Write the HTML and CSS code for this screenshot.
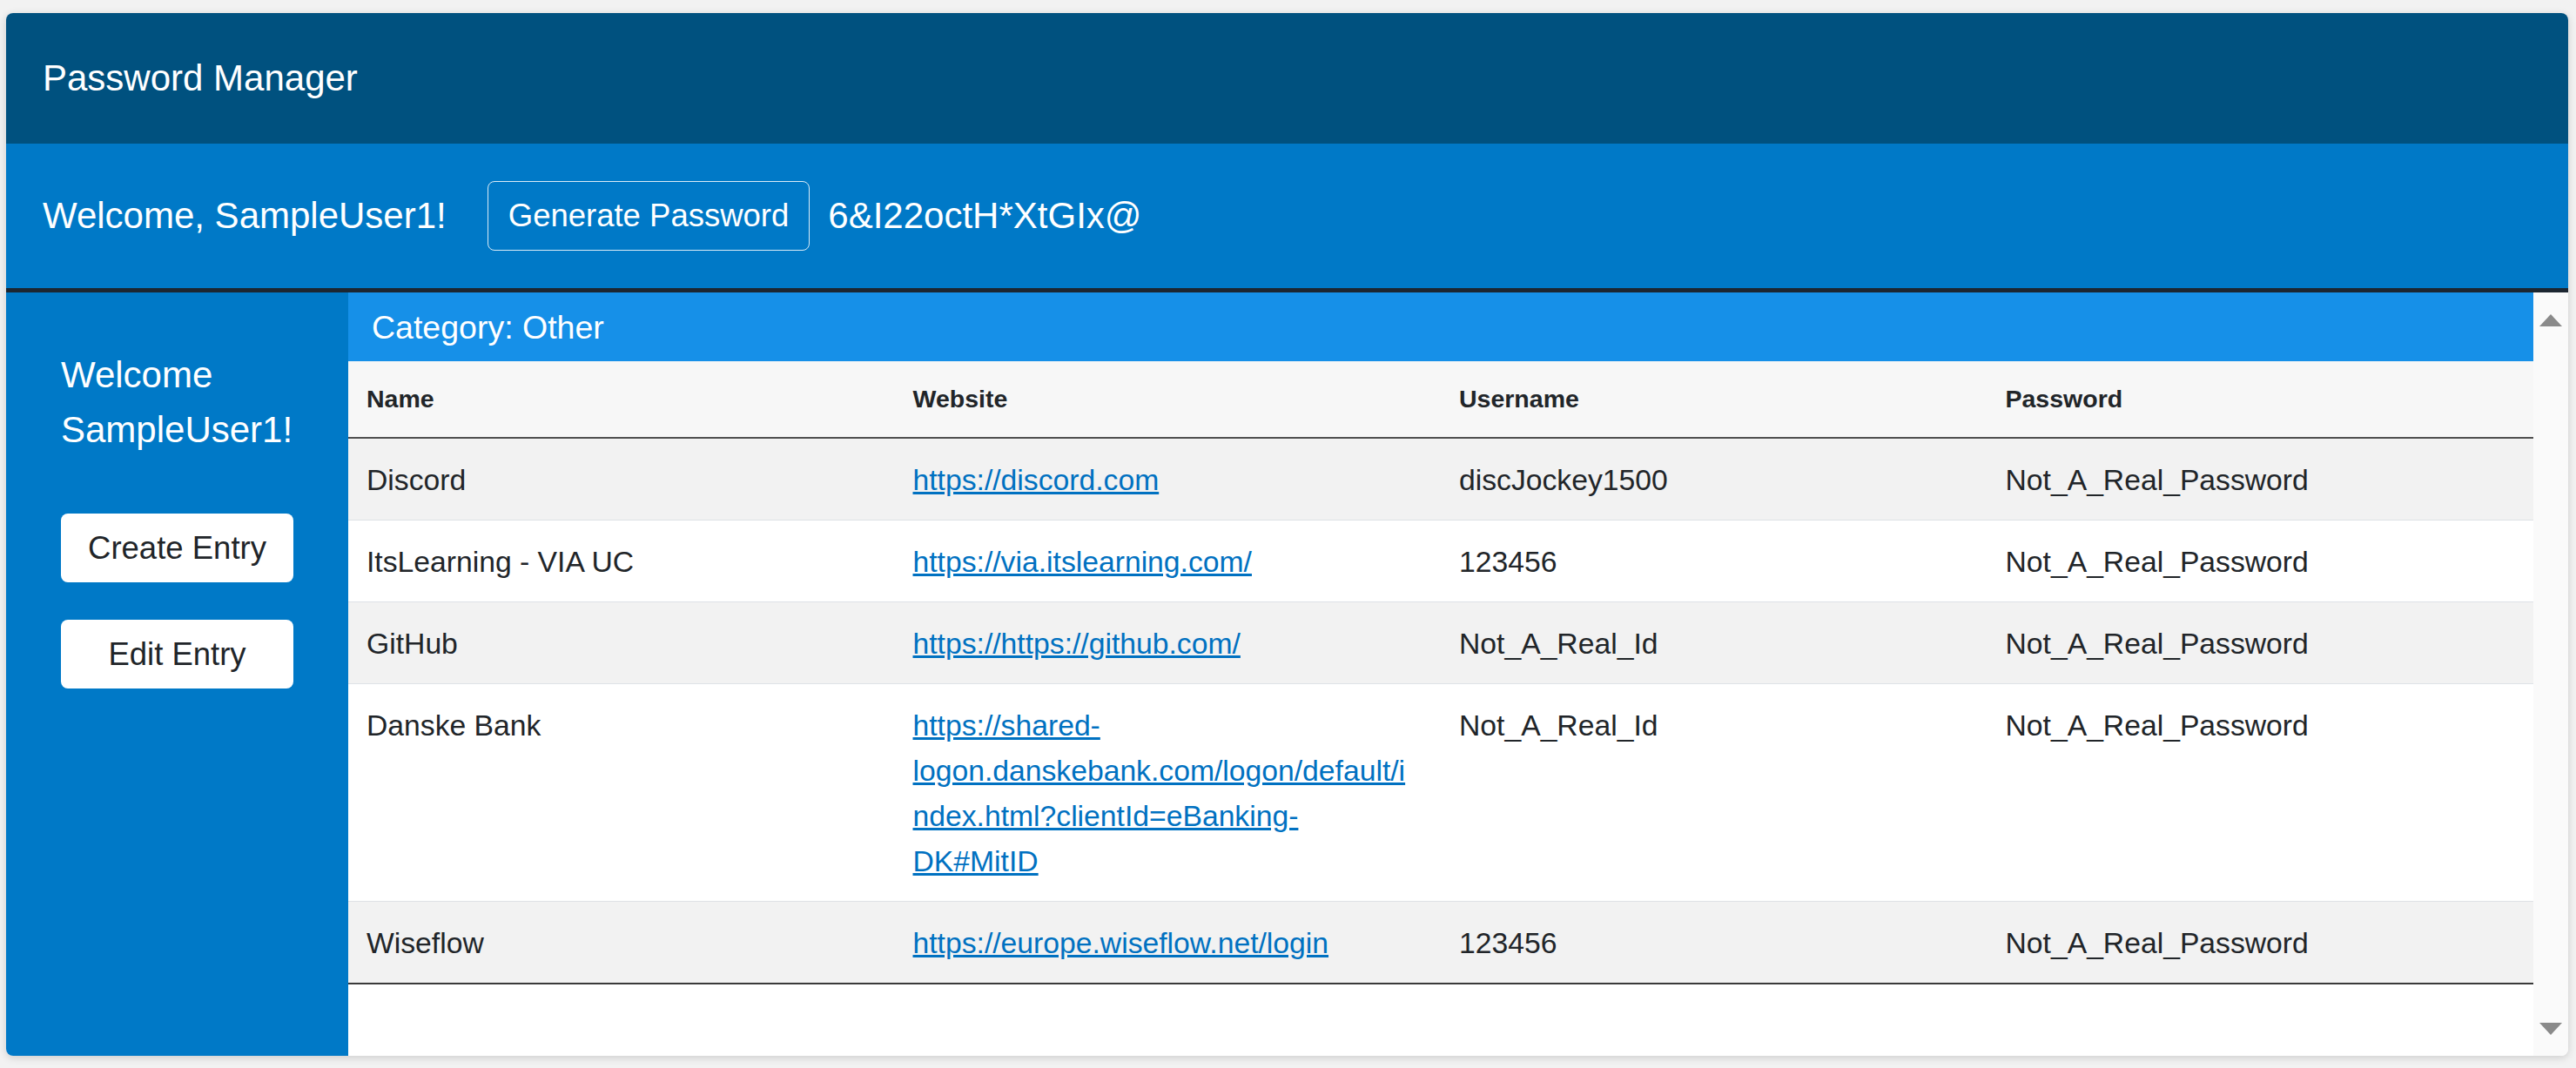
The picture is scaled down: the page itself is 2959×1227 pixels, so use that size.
FILE: index.html
```html
<!DOCTYPE html>
<html lang="en">
<head>
<meta charset="utf-8">
<title>Password Manager</title>
<link rel="stylesheet" href="styles.css">
</head>
<body>
<div class="app">
  <header class="topbar">Password Manager</header>
  <div class="userbar">
    <span class="user-greeting">Welcome, SampleUser1!</span>
    <button class="btn-outline" type="button">Generate Password</button>
    <span class="generated">6&amp;I22octH*XtGIx@</span>
  </div>
  <div class="main">
    <aside class="sidebar">
      <p class="side-welcome">Welcome SampleUser1!</p>
      <button class="btn-light" type="button">Create Entry</button>
      <button class="btn-light" type="button">Edit Entry</button>
    </aside>
    <section class="content">
      <div class="category">Category: Other</div>
      <table class="entries">
        <thead>
          <tr><th>Name</th><th>Website</th><th>Username</th><th>Password</th></tr>
        </thead>
        <tbody>
          <tr><td>Discord</td><td><a href="#">https://discord.com</a></td><td>discJockey1500</td><td>Not_A_Real_Password</td></tr>
          <tr><td>ItsLearning - VIA UC</td><td><a href="#">https://via.itslearning.com/</a></td><td>123456</td><td>Not_A_Real_Password</td></tr>
          <tr><td>GitHub</td><td><a href="#">https://https://github.com/</a></td><td>Not_A_Real_Id</td><td>Not_A_Real_Password</td></tr>
          <tr><td>Danske Bank</td><td><a href="#">https://shared-logon.danskebank.com/logon/default/index.html?clientId=eBanking-DK#MitID</a></td><td>Not_A_Real_Id</td><td>Not_A_Real_Password</td></tr>
          <tr><td>Wiseflow</td><td><a href="#">https://europe.wiseflow.net/login</a></td><td>123456</td><td>Not_A_Real_Password</td></tr>
        </tbody>
      </table>
    </section>
    <div class="scrollbar"><span class="arrow up"></span><span class="arrow down"></span></div>
  </div>
</div>
</body>
</html>
```

FILE: styles.css
```css
* { box-sizing: border-box; }
html, body { margin: 0; }
body {
  background: #f2f2f2;
  padding: 15px 9px 14px 7px;
  font-family: "Liberation Sans", Arial, sans-serif;
  color: #212529;
}
.app {
  height: 1198px;
  background: #fff;
  border-radius: 8px;
  overflow: hidden;
  display: flex;
  flex-direction: column;
  box-shadow: 0 2px 10px rgba(0, 0, 0, 0.16);
}
.topbar {
  height: 150px;
  flex: none;
  background: #00517f;
  color: #fff;
  font-size: 42px;
  display: flex;
  align-items: center;
  padding-left: 42px;
}
.userbar {
  height: 171px;
  flex: none;
  background: #0079c7;
  border-bottom: 5px solid #1c2631;
  display: flex;
  align-items: center;
  padding-left: 42px;
  color: #fff;
  font-size: 42px;
}
.btn-outline {
  margin-left: 47px;
  height: 80px;
  padding: 0 23px;
  font-family: "Liberation Sans", Arial, sans-serif;
  font-size: 36.5px;
  color: #fff;
  background: transparent;
  border: 1.5px solid rgba(255, 255, 255, 0.85);
  border-radius: 8px;
}
.generated { margin-left: 21px; }
.main {
  flex: 1;
  display: flex;
  min-height: 0;
}
.sidebar {
  width: 393px;
  flex: none;
  background: #0079c7;
  padding: 63px 0 0 63px;
  color: #fff;
}
.side-welcome {
  margin: 0 0 65px;
  width: 300px;
  font-size: 42px;
  line-height: 63px;
}
.btn-light {
  display: block;
  width: 267px;
  height: 79px;
  padding: 0;
  background: #fff;
  border: none;
  border-radius: 8px;
  font-family: "Liberation Sans", Arial, sans-serif;
  font-size: 36.5px;
  color: #212529;
}
.btn-light + .btn-light { margin-top: 43px; }
.content {
  flex: 1;
  min-width: 0;
  background: #fff;
}
.category {
  background: #1690e8;
  color: #fff;
  font-size: 37.5px;
  line-height: 56px;
  padding: 11.5px 27px;
}
.entries {
  width: 100%;
  table-layout: fixed;
  border-collapse: separate;
  border-spacing: 0;
}
.entries th {
  text-align: left;
  font-size: 28.5px;
  font-weight: bold;
  line-height: 43px;
  padding: 22px 31.5px 22px 21px;
  background: #f7f7f7;
  border-bottom: 2px solid #4f4f4f;
}
.entries td {
  font-size: 33.7px;
  line-height: 52px;
  padding: 20.5px 31.5px 20.5px 21px;
  border-bottom: 1px solid #dee2e6;
  vertical-align: top;
  overflow-wrap: anywhere;
}
.entries tbody tr:nth-child(odd) td { background: #f2f2f2; }
.entries tbody tr:last-child td { border-bottom: 2px solid #3a3a3a; }
.entries a { color: #0071c1; text-decoration: underline; }
.scrollbar {
  width: 40px;
  flex: none;
  background: #fafafa;
  display: flex;
  flex-direction: column;
  justify-content: space-between;
  align-items: center;
  padding: 25px 0 24px;
}
.arrow {
  width: 0;
  height: 0;
  border-left: 13.5px solid transparent;
  border-right: 13.5px solid transparent;
}
.arrow.up { border-bottom: 14px solid #8a8a8a; }
.arrow.down { border-top: 14px solid #8a8a8a; }
```
